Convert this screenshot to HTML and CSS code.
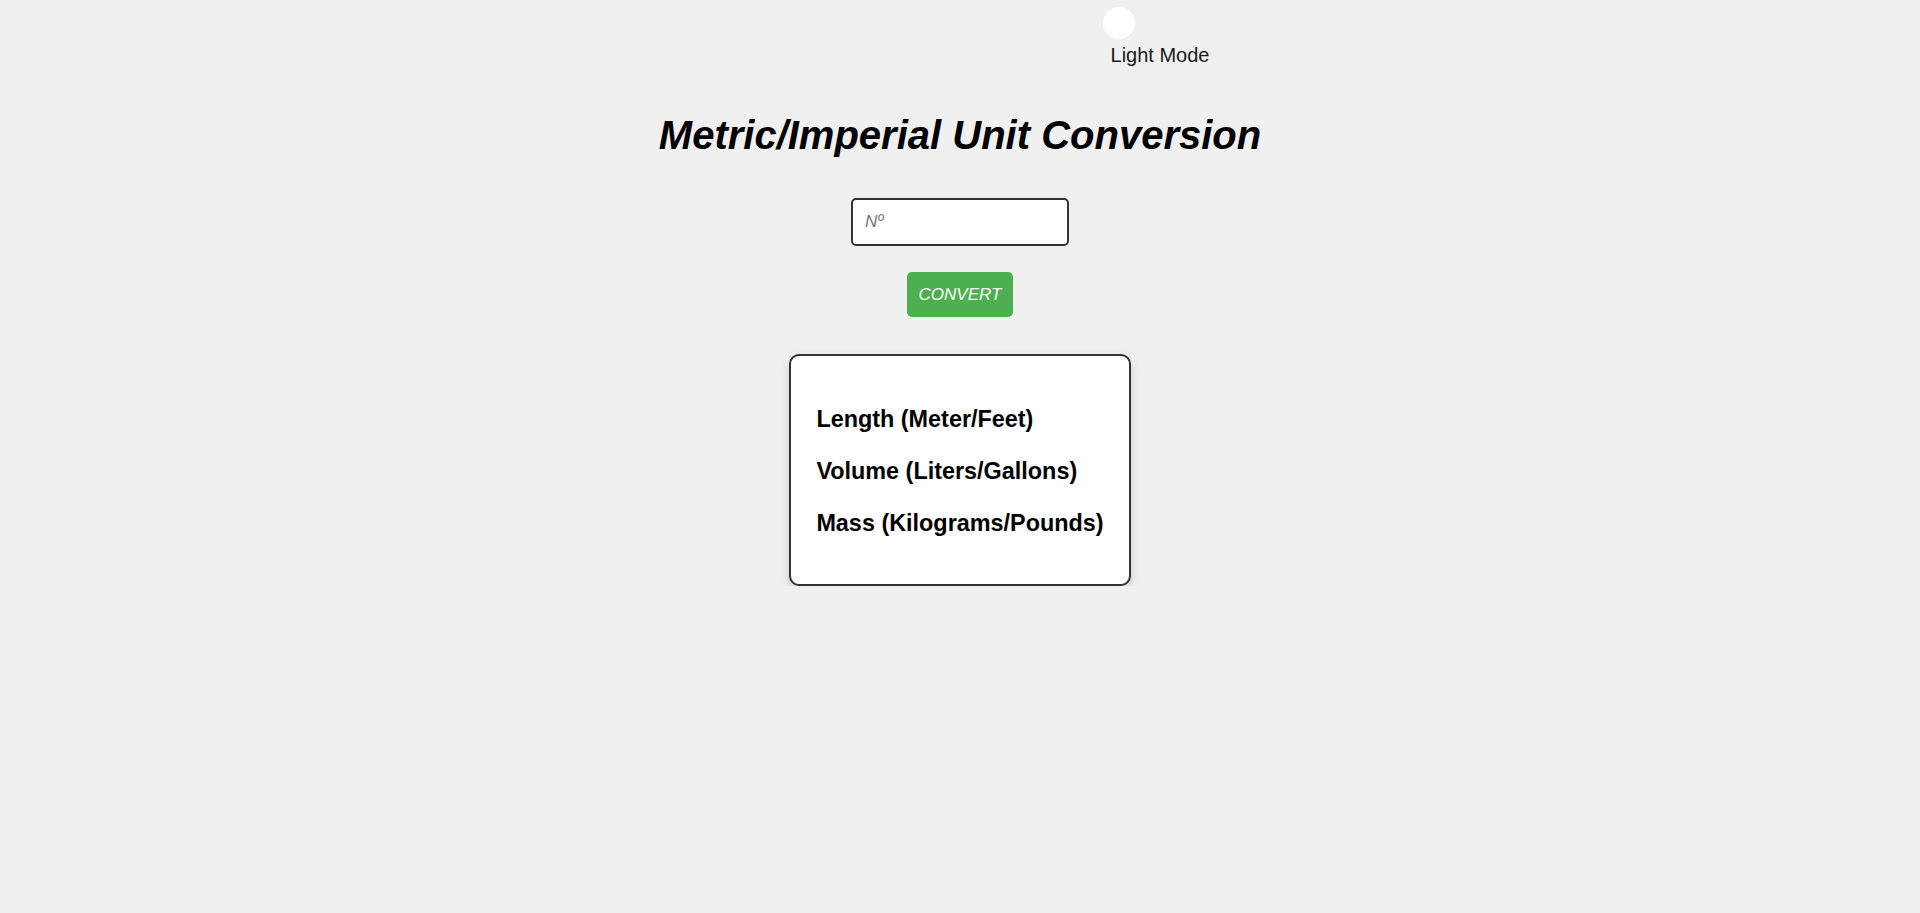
FILE: index.html
```html
<!DOCTYPE html>
<html lang="en">
<head>
<meta charset="utf-8">
<title>Metric/Imperial Unit Conversion</title>
<link rel="stylesheet" href="styles.css">
</head>
<body>
  <header class="top">
    <div class="theme-toggle">
      <div class="switch"><span class="knob"></span></div>
      <span class="mode-label">Light Mode</span>
    </div>
  </header>
  <main class="main">
    <h1 class="title">Metric/Imperial Unit Conversion</h1>
    <input class="num-input" type="text" placeholder="Nº">
    <button class="convert-btn" type="button">CONVERT</button>
    <section class="results">
      <h2 class="result">Length (Meter/Feet)</h2>
      <h2 class="result">Volume (Liters/Gallons)</h2>
      <h2 class="result">Mass (Kilograms/Pounds)</h2>
    </section>
  </main>
</body>
</html>
```

FILE: styles.css
```css
html, body {
  margin: 0;
  padding: 0;
}

body {
  background: #f0f0f0;
  font-family: "Liberation Sans", Arial, sans-serif;
  color: #000;
}

.top {
  display: flex;
  justify-content: center;
  padding: 4px 0 0 400px;
}

.theme-toggle {
  display: flex;
  flex-direction: column;
  align-items: center;
}

.switch {
  width: 120px;
  height: 38px;
  padding: 3px;
  box-sizing: border-box;
  display: flex;
  align-items: center;
}

.knob {
  width: 32px;
  height: 32px;
  border-radius: 50%;
  background: #ffffff;
}

.mode-label {
  font-size: 20px;
  line-height: 23px;
  margin-top: 2px;
  color: #1a1a1a;
}

.main {
  display: flex;
  flex-direction: column;
  align-items: center;
  padding-top: 45px;
}

.title {
  margin: 0;
  font-size: 40px;
  font-weight: bold;
  font-style: italic;
  line-height: 46px;
}

.num-input {
  margin-top: 40px;
  width: 218px;
  height: 48px;
  box-sizing: border-box;
  border: 2px solid #333;
  border-radius: 5px;
  background: #fff;
  padding: 0 12px;
  font-family: "Liberation Sans", Arial, sans-serif;
  font-size: 17px;
  font-style: italic;
  outline: none;
}

.num-input::placeholder {
  color: #777;
  font-style: italic;
}

.convert-btn {
  margin-top: 26px;
  width: 106px;
  height: 45px;
  border: none;
  border-radius: 5px;
  background: #4caf50;
  color: #fff;
  font-family: "Liberation Sans", Arial, sans-serif;
  font-size: 17px;
  font-style: italic;
  padding: 0;
}

.results {
  margin-top: 37px;
  display: flex;
  flex-direction: column;
  gap: 25px;
  padding: 50px 25px 47px;
  background: #fff;
  border: 2px solid #333;
  border-radius: 10px;
  box-shadow: 0 4px 10px rgba(0, 0, 0, 0.15);
}

.result {
  margin: 0;
  font-size: 23.4px;
  font-weight: bold;
  line-height: normal;
}
```
